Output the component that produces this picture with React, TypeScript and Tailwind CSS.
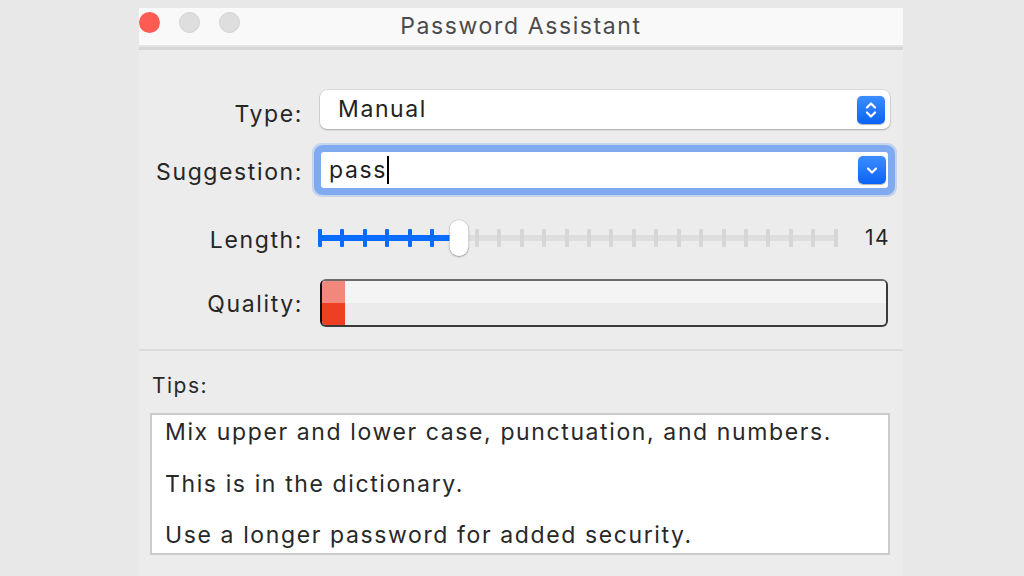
import React from "react";

const font = { fontFamily: "Inter, 'Noto Sans', 'Liberation Sans', sans-serif" };

const TICKS = Array.from({ length: 24 }, (_, i) => i);
const MIN = 8;
const VALUE = 14;

function UpDownChevron() {
  return (
    <svg width="14" height="20" viewBox="0 0 14 20" fill="none">
      <path d="M3 7.5 7 3.5l4 4" stroke="white" strokeWidth="2.2" strokeLinecap="round" strokeLinejoin="round" />
      <path d="M3 12.5 7 16.5l4-4" stroke="white" strokeWidth="2.2" strokeLinecap="round" strokeLinejoin="round" />
    </svg>
  );
}

function DownChevron() {
  return (
    <svg width="14" height="10" viewBox="0 0 14 10" fill="none">
      <path d="M3 3.5 7 7.5l4-4" stroke="white" strokeWidth="2.2" strokeLinecap="round" strokeLinejoin="round" />
    </svg>
  );
}

function BlueButton({ children }: { children: React.ReactNode }) {
  return (
    <div className="flex h-[28px] w-[28px] items-center justify-center rounded-[5px] bg-gradient-to-b from-[#3b8dff] to-[#0962f6] shadow-[0_0.5px_1px_rgba(0,0,0,0.3)]">
      {children}
    </div>
  );
}

// letter-spacing leaves a trailing gap, so the column is a little wider than the text edge
function Label({ children, className = "" }: { children: React.ReactNode; className?: string }) {
  return (
    <div className={`w-[164px] shrink-0 text-right text-[23px] tracking-[0.07em] text-[#262626] ${className}`}>
      {children}
    </div>
  );
}

function LengthSlider() {
  const pct = ((VALUE - MIN) / (TICKS.length - 1)) * 100;
  return (
    <div className="relative -ml-[2px] h-[40px] w-[520px]">
      {/* track */}
      <div className="absolute left-[2px] right-[2px] top-[17px] h-[6px] bg-[#dedede]" />
      <div className="absolute left-[2px] top-[17px] h-[6px] bg-[#0a6cff]" style={{ width: `${pct}%` }} />
      {/* ticks */}
      <div className="absolute inset-x-0 top-[11px] flex justify-between">
        {TICKS.map((t) => (
          <div
            key={t}
            className={`h-[18px] w-[4px] rounded-[1px] ${t + MIN <= VALUE ? "bg-[#0a6cff]" : "bg-[#d6d6d6]"}`}
          />
        ))}
      </div>
      {/* thumb */}
      <div
        className="absolute top-[2px] h-[36px] w-[19px] -translate-x-1/2 rounded-full bg-white shadow-[0_0_0_0.5px_rgba(0,0,0,0.15),0_1px_2px_rgba(0,0,0,0.3)]"
        style={{ left: `calc(${pct}% + 5px)` }}
      />
    </div>
  );
}

export default function App() {
  return (
    <div className="min-h-[576px] w-full bg-[#e8e8e8] pl-[139px] pt-[8px]" style={font}>
      <div className="flex h-[568px] w-[764px] flex-col bg-[#ececec]">
        {/* title bar */}
        <div className="relative flex h-[37px] items-center justify-center bg-[#f9f9f9]">
          <div className="absolute left-0 top-[4px] flex gap-[19px]">
            <div className="h-[21px] w-[21px] rounded-full bg-[#fe5b52]" />
            <div className="h-[21px] w-[21px] rounded-full border border-[#d2d2d2] bg-[#dedede]" />
            <div className="h-[21px] w-[21px] rounded-full border border-[#d2d2d2] bg-[#dedede]" />
          </div>
          <span className="text-[23px] tracking-[0.07em] text-[#4b4b4b]">Password Assistant</span>
        </div>
        <div className="h-[2px] bg-[#e4e4e4]" />
        <div className="h-[3px] bg-[#d6d6d6]" />

        {/* form */}
        <div className="flex flex-col">
          <div className="mt-[40px] flex h-[39px] items-center gap-[17px]">
            <Label className="translate-y-[5px]">Type:</Label>
            <div className="flex h-[39px] w-[570px] items-center justify-between rounded-[7px] bg-white pl-[18px] pr-[5px] shadow-[0_0_0_0.5px_rgba(0,0,0,0.12),0_1px_2px_rgba(0,0,0,0.25)]">
              <span className="text-[23px] tracking-[0.07em] text-[#232323]">Manual</span>
              <BlueButton>
                <UpDownChevron />
              </BlueButton>
            </div>
          </div>

          <div className="mt-[23px] flex h-[36px] items-center gap-[18px]">
            <Label className="translate-y-[2px]">Suggestion:</Label>
            <div className="flex h-[36px] w-[567px] items-center justify-between rounded-[3px] bg-white pl-[8px] pr-[2px] shadow-[0_0_0_7px_#7faaf0,0_0_0_9px_rgba(127,170,240,0.35)]">
              <div className="flex items-center">
                <span className="text-[23px] tracking-[0.07em] text-[#1f1f1f]">pass</span>
                <div className="h-[28px] w-[2px] bg-black" />
              </div>
              <BlueButton>
                <DownChevron />
              </BlueButton>
            </div>
          </div>

          <div className="mt-[30px] flex h-[40px] items-center gap-[17px]">
            <Label className="translate-y-[2px]">Length:</Label>
            <div className="flex w-[569px] items-center justify-between">
              <LengthSlider />
              <span className="-mr-[1px] text-[21px] tracking-[0.07em] text-[#262626]">{VALUE}</span>
            </div>
          </div>

          <div className="mt-[21px] flex h-[48px] items-center gap-[17px]">
            <Label className="translate-y-[1px]">Quality:</Label>
            <div className="flex h-[48px] w-[568px] flex-col overflow-hidden rounded-[6px] border-2 border-[#3a3a3a] border-t-[#6a6a6a] border-l-[#111] bg-[#ebebeb]">
              <div className="flex h-1/2 bg-[#f4f4f4]">
                <div className="w-[23px] bg-[#f2887c]" />
              </div>
              <div className="flex h-1/2">
                <div className="w-[23px] bg-[#ef3f22]" />
              </div>
            </div>
          </div>
        </div>

        <div className="mt-[22px] h-[2px] bg-[#dcdcdc]" />

        {/* tips */}
        <div className="pl-[13px] pt-[22px] text-[21px] leading-[25px] tracking-[0.07em] text-[#282828]">Tips:</div>
        <div className="ml-[11px] mt-[15px] flex h-[142px] w-[740px] flex-col gap-[23.5px] border-2 border-[#cbcbcb] bg-white pl-[13px] pt-[3px] text-[23px] leading-[28px] tracking-[0.07em] text-[#282828]">
          <div>Mix upper and lower case, punctuation, and numbers.</div>
          <div>This is in the dictionary.</div>
          <div>Use a longer password for added security.</div>
        </div>
      </div>
    </div>
  );
}
